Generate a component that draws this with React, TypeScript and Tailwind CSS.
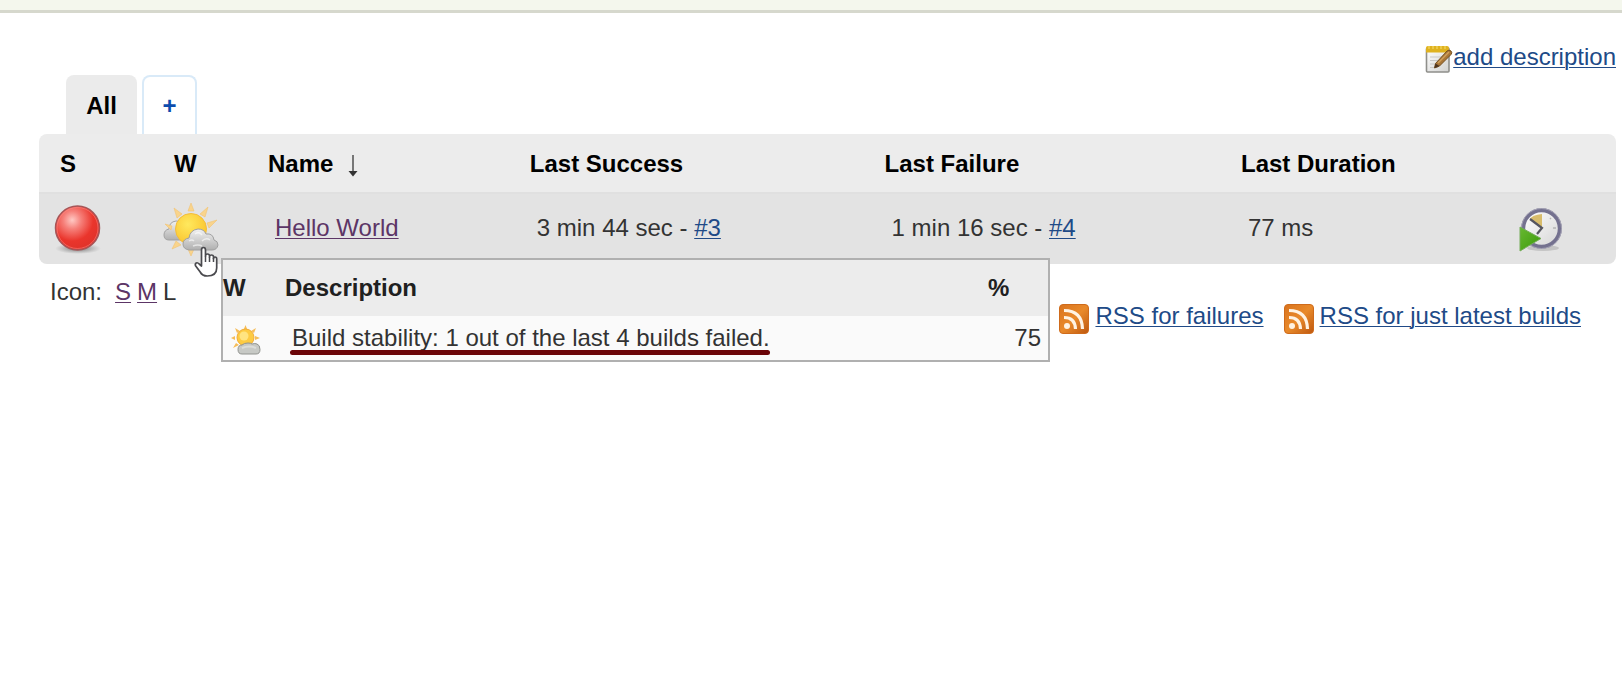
import React from "react";

function NotepadIcon() {
  return (
    <svg viewBox="0 0 28 28" className="h-7 w-7 shrink-0" aria-hidden="true">
      <defs>
        <linearGradient id="paper" x1="0" y1="0" x2="1" y2="1">
          <stop offset="0" stopColor="#ffffff" />
          <stop offset="1" stopColor="#d2d2d0" />
        </linearGradient>
      </defs>
      <rect x="1.5" y="3" width="22.5" height="24" rx="1" fill="url(#paper)" stroke="#8f8f8b" strokeWidth="1.6" />
      <path d="M5 12h14M5 15.500h12M5 19h9M5 22.500h8" stroke="#c9c9c7" strokeWidth="1" />
      <path d="M1 3q0-2 2-2h19q2 0 2 2v4.500H1z" fill="#dfb21f" />
      <path d="M4 1v3M8 1v3M12 1v3M16 1v3M20 1v3" stroke="#f0cf55" strokeWidth="1.500" />
      <path d="M10.500 18.500L22 6q2-1.800 4 0 1.600 1.800 0 3.500L14.500 21l-5 2z" fill="#a97636" stroke="#75501f" strokeWidth="1" />
      <path d="M13 18L24 7" stroke="#d0a05c" strokeWidth="1.500" />
      <path d="M10.500 18.500l4 2.500-5 2z" fill="#4d3420" />
    </svg>
  );
}

function RedBallIcon() {
  return (
    <svg viewBox="0 0 48 50" className="block h-[50px] w-12" role="img" aria-label="Failed">
      <defs>
        <radialGradient id="ball" cx=".38" cy=".32" r=".68">
          <stop offset="0" stopColor="#ffc9c4" />
          <stop offset=".3" stopColor="#f6807a" />
          <stop offset=".7" stopColor="#ea352c" />
          <stop offset="1" stopColor="#e0322a" />
        </radialGradient>
        <radialGradient id="ballShadow">
          <stop offset="0" stopColor="#555" stopOpacity=".8" />
          <stop offset="1" stopColor="#777" stopOpacity="0" />
        </radialGradient>
      </defs>
      <ellipse cx="24" cy="44.500" rx="23" ry="5.500" fill="url(#ballShadow)" />
      <circle cx="23.500" cy="24" r="22" fill="url(#ball)" stroke="#a65557" strokeWidth="1.500" />
      <circle cx="23.500" cy="24" r="20.500" fill="none" stroke="#ff8c86" strokeOpacity=".5" strokeWidth="1" />
    </svg>
  );
}

function WeatherIcon() {
  return (
    <svg viewBox="0 0 56 56" className="block h-14 w-14" role="img" aria-label="Partly sunny">
      <defs>
        <radialGradient id="sun" cx=".4" cy=".35" r=".7">
          <stop offset="0" stopColor="#ffe95e" />
          <stop offset="1" stopColor="#fac32c" />
        </radialGradient>
        <linearGradient id="cloud" x1="0" y1="0" x2="0" y2="1">
          <stop offset="0" stopColor="#f2f2f2" />
          <stop offset="1" stopColor="#b0b0b0" />
        </linearGradient>
      </defs>
      <path d="M6 39q-5 0-5-5t5-6q0-7 7-8 8 0 9 8v11z" fill="url(#cloud)" stroke="#a3a3a3" />
      <g fill="#f9d48c" stroke="#f2c272" strokeWidth=".6">
        <path d="M25 10l3-8 3 8zM25 48l3 7 3-7zM9 25l-7-2 6 6zM37 13l8-7-3 10zM19 13l-8-6 3 10zM44 22l10-3-8 8zM13 40l-4 8 9-4z" />
      </g>
      <circle cx="28" cy="28" r="15.500" fill="url(#sun)" stroke="#f3bd3b" />
      <path d="M26 49q-6-1-6-6t6-6q1-8 9-9 6 0 8 5 7-1 8 6 4 1 4 5-1 5-6 5z" fill="url(#cloud)" stroke="#a0a0a0" />
      <path d="M26 40q3-2 5 0M32 33q4-3 7 1M39 40q4-4 8-1M30 45q5-2 9 0" fill="none" stroke="#fff" strokeOpacity=".6" strokeWidth="1.500" />
    </svg>
  );
}

function SmallWeatherIcon() {
  return (
    <svg viewBox="0 0 30 30" className="block h-[30px] w-[30px]" role="img" aria-label="Partly sunny">
      <g fill="#f6bd59">
        <path d="M12.500 5L14.500 0l2 5zM6 8L4 3l5 3zM20 6l5-3-2 5zM4 15l-4-2 4-2zM24 11l5 2-5 2zM5 18l-3 5 6-3z" />
      </g>
      <circle cx="14.500" cy="12.500" r="8.500" fill="#fdcb42" stroke="#f1ac36" />
      <circle cx="13" cy="11" r="4.500" fill="#ffe481" />
      <path d="M11 29q-4 0-4-4.500t4-4.500q2-2 6-2 3 0 4 1 3-1 5 0 3 1 3 5.500t-4 4.500z" fill="#c7c9c5" stroke="#929490" />
      <path d="M11 23q7-3 14 0" fill="none" stroke="#dcddd9" strokeWidth="2" />
    </svg>
  );
}

function ScheduleIcon() {
  return (
    <svg viewBox="0 0 44 46" className="block h-[46px] w-11" aria-hidden="true">
      <defs>
        <linearGradient id="face" x1="0" y1="0" x2="1" y2="1">
          <stop offset="0" stopColor="#ffffff" />
          <stop offset="1" stopColor="#d5d5d5" />
        </linearGradient>
        <linearGradient id="play" x1="0" y1="0" x2="1" y2="1">
          <stop offset="0" stopColor="#68b832" />
          <stop offset="1" stopColor="#3a9a08" />
        </linearGradient>
      </defs>
      <ellipse cx="24" cy="42" rx="16" ry="3" fill="#c4c4c4" />
      <circle cx="22.500" cy="22.500" r="18.300" fill="url(#face)" stroke="#74718f" strokeWidth="4" />
      <circle cx="22.500" cy="22.500" r="20" fill="none" stroke="#a4a2b4" strokeWidth="1" />
      <path d="M23 21L11 13q2-4 12-5z" fill="#d8bc6b" />
      <path d="M11 13l12 9-5 6" fill="none" stroke="#55555f" strokeWidth="2.200" />
      <path d="M34 22h3M31 13l1-1" stroke="#b4b4b4" strokeWidth="1.500" />
      <path d="M1 21l21 11.500L1 45z" fill="url(#play)" stroke="#74ad58" />
    </svg>
  );
}

function RssIcon() {
  return (
    <svg viewBox="0 0 30 30" className="h-[30px] w-[30px] shrink-0" aria-hidden="true">
      <defs>
        <linearGradient id="rss" x1="0" y1="0" x2="1" y2="1">
          <stop offset="0" stopColor="#d9731d" />
          <stop offset=".5" stopColor="#e98a2b" />
          <stop offset="1" stopColor="#bd570f" />
        </linearGradient>
      </defs>
      <rect x=".5" y=".5" width="29" height="29" rx="3.500" fill="url(#rss)" stroke="#cf6b1b" />
      <circle cx="8" cy="22" r="3" fill="#fff3e3" />
      <path d="M5 13.500q11 0 11.500 11.500M5 6.500q18 0 18.500 18.500" fill="none" stroke="#fff3e3" strokeWidth="3.200" />
    </svg>
  );
}

function HandPointer() {
  return (
    <svg viewBox="0 0 24 32" className="pointer-events-none absolute left-[31px] top-[45px] z-20 h-8 w-6" aria-hidden="true">
      <path
        d="M7.500 20V4q0-2.500 2-2.500t2 2.500v6q0-2 2-2t2 2v1q0-2 2-2t2 2v1.500q0-1.500 1.500-1.500 1.700 0 1.700 2V22q0 8-9.500 8-5 0-7-4l-4.500-6q-1-2 .5-3 1.300-.8 3 1z"
        fill="#fff"
        stroke="#4a4a4e"
        strokeWidth="1.700"
        strokeLinejoin="round"
      />
      <path d="M11.500 10v6M15.500 11v5M19.500 12v4" stroke="#4a4a4e" strokeWidth="1.500" />
    </svg>
  );
}

function HealthReport() {
  return (
    <div className="absolute left-[58px] top-[57px] z-10 w-[829px] border-2 border-[#b0b0b0] bg-[#fafafa]">
      <table className="w-full table-fixed border-separate border-spacing-0 text-left">
        <colgroup>
          <col className="w-14" />
          <col />
          <col className="w-[68px]" />
        </colgroup>
        <thead className="bg-[#ececec] text-[#202020]">
          <tr className="h-14">
            <th>W</th>
            <th className="pl-1.5">Description</th>
            <th className="pl-2">%</th>
          </tr>
        </thead>
        <tbody>
          <tr className="h-11">
            <td className="pl-2 pt-1"><SmallWeatherIcon /></td>
            <td className="pl-[11px]">
              <span className="relative inline-block pl-0.5 leading-[34px]">
                Build stability: 1 out of the last 4 builds failed.
                <span className="absolute inset-x-0 bottom-0 h-[5px] rounded-full bg-[#6b0508]" />
              </span>
            </td>
            <td className="pr-[7px] text-right">75</td>
          </tr>
        </tbody>
      </table>
    </div>
  );
}

const link = "text-[#204a87] underline decoration-1 underline-offset-2";
const visited = "text-[#5c3566] underline decoration-1 underline-offset-2";

export default function App() {
  return (
    <div className="min-h-screen bg-white font-['Liberation_Sans',Arial,sans-serif] text-2xl leading-7 text-[#333]">
      <header className="h-[13px] border-b-[3px] border-[#d6d8cd] bg-[#f4f7ed]" />
      <main className="pl-[39px] pr-[6px] pt-[30px]">
        <div className="flex h-8 justify-end">
          <a href="#description" className={`flex items-start ${link}`}>
            <span className="pt-0.5"><NotepadIcon /></span>
            <span>add description</span>
          </a>
        </div>

        <nav className="flex gap-[5px] pl-[27px] font-bold" aria-label="Views">
          <a href="#all" className="flex h-[59px] w-[71px] items-center justify-center rounded-t-lg bg-[#ebebeb] pt-0.5 text-black">All</a>
          <a href="#new-view" className="flex h-[59px] w-[55px] items-center justify-center rounded-t-lg border-2 border-b-0 border-[#d9eaf8] text-[#0b4cad]">+</a>
        </nav>

        <table className="w-full table-fixed border-separate border-spacing-0 text-left">
          <colgroup>
            <col className="w-[117px]" />
            <col className="w-[105px]" />
            <col className="w-[16.6%]" />
            <col className="w-[22.5%]" />
            <col className="w-[22.6%]" />
            <col />
            <col className="w-[104px]" />
          </colgroup>
          <thead className="text-black">
            <tr className="h-[60px] *:border-b-2 *:border-[#e0e0e0] *:bg-[#ececec] *:pt-0.5">
              <th className="rounded-tl-lg pl-[21px]">S</th>
              <th className="pl-[18px]">W</th>
              <th className="pl-[7px]">
                <span className="flex items-center gap-[14px]">
                  Name
                  <svg viewBox="0 0 12 22" className="mt-1 h-[22px] w-3" role="img" aria-label="sorted">
                    <path d="M6 0v18" stroke="#777" strokeWidth="2" />
                    <path d="M1.500 16h9L6 21.500z" fill="#333" />
                  </svg>
                </span>
              </th>
              <th className="pl-[7px]">Last Success</th>
              <th className="pl-[7px]">Last Failure</th>
              <th className="pl-[7px]">Last Duration</th>
              <th className="rounded-tr-lg" aria-label="Actions" />
            </tr>
          </thead>
          <tbody>
            <tr className="h-[70px] *:bg-[#e3e3e3]">
              <td className="rounded-bl-lg pl-[15px]"><RedBallIcon /></td>
              <td className="pl-[7px]">
                <div className="relative w-14">
                  <WeatherIcon />
                  <HandPointer />
                  <HealthReport />
                </div>
              </td>
              <td className="pb-0.5 pl-[14px]"><a href="#hello-world" className={visited}>Hello World</a></td>
              <td className="pb-0.5 pl-[14px]">3 min 44 sec - <a href="#build-3" className={link}>#3</a></td>
              <td className="pb-0.5 pl-[14px]">1 min 16 sec - <a href="#build-4" className={link}>#4</a></td>
              <td className="pb-0.5 pl-[14px]">77 ms</td>
              <td className="rounded-br-lg pl-[7px]">
                <button type="button" aria-label="Schedule a build" className="block"><ScheduleIcon /></button>
              </td>
            </tr>
          </tbody>
        </table>

        <footer className="flex items-start justify-between pl-[11px] pr-[35px] pt-[14px]">
          <div className="flex gap-1.5">
            <span className="pr-[7px]">Icon:</span>
            <a href="#small" className={visited}>S</a>
            <a href="#medium" className={visited}>M</a>
            <span>L</span>
          </div>
          <div className="flex gap-5 pt-6">
            <a href="#rss-failures" className={`flex items-start gap-1.5 ${link}`}>
              <span className="pt-0.5"><RssIcon /></span>
              <span>RSS for failures</span>
            </a>
            <a href="#rss-latest" className={`flex items-start gap-1.5 ${link}`}>
              <span className="pt-0.5"><RssIcon /></span>
              <span>RSS for just latest builds</span>
            </a>
          </div>
        </footer>
      </main>
    </div>
  );
}
